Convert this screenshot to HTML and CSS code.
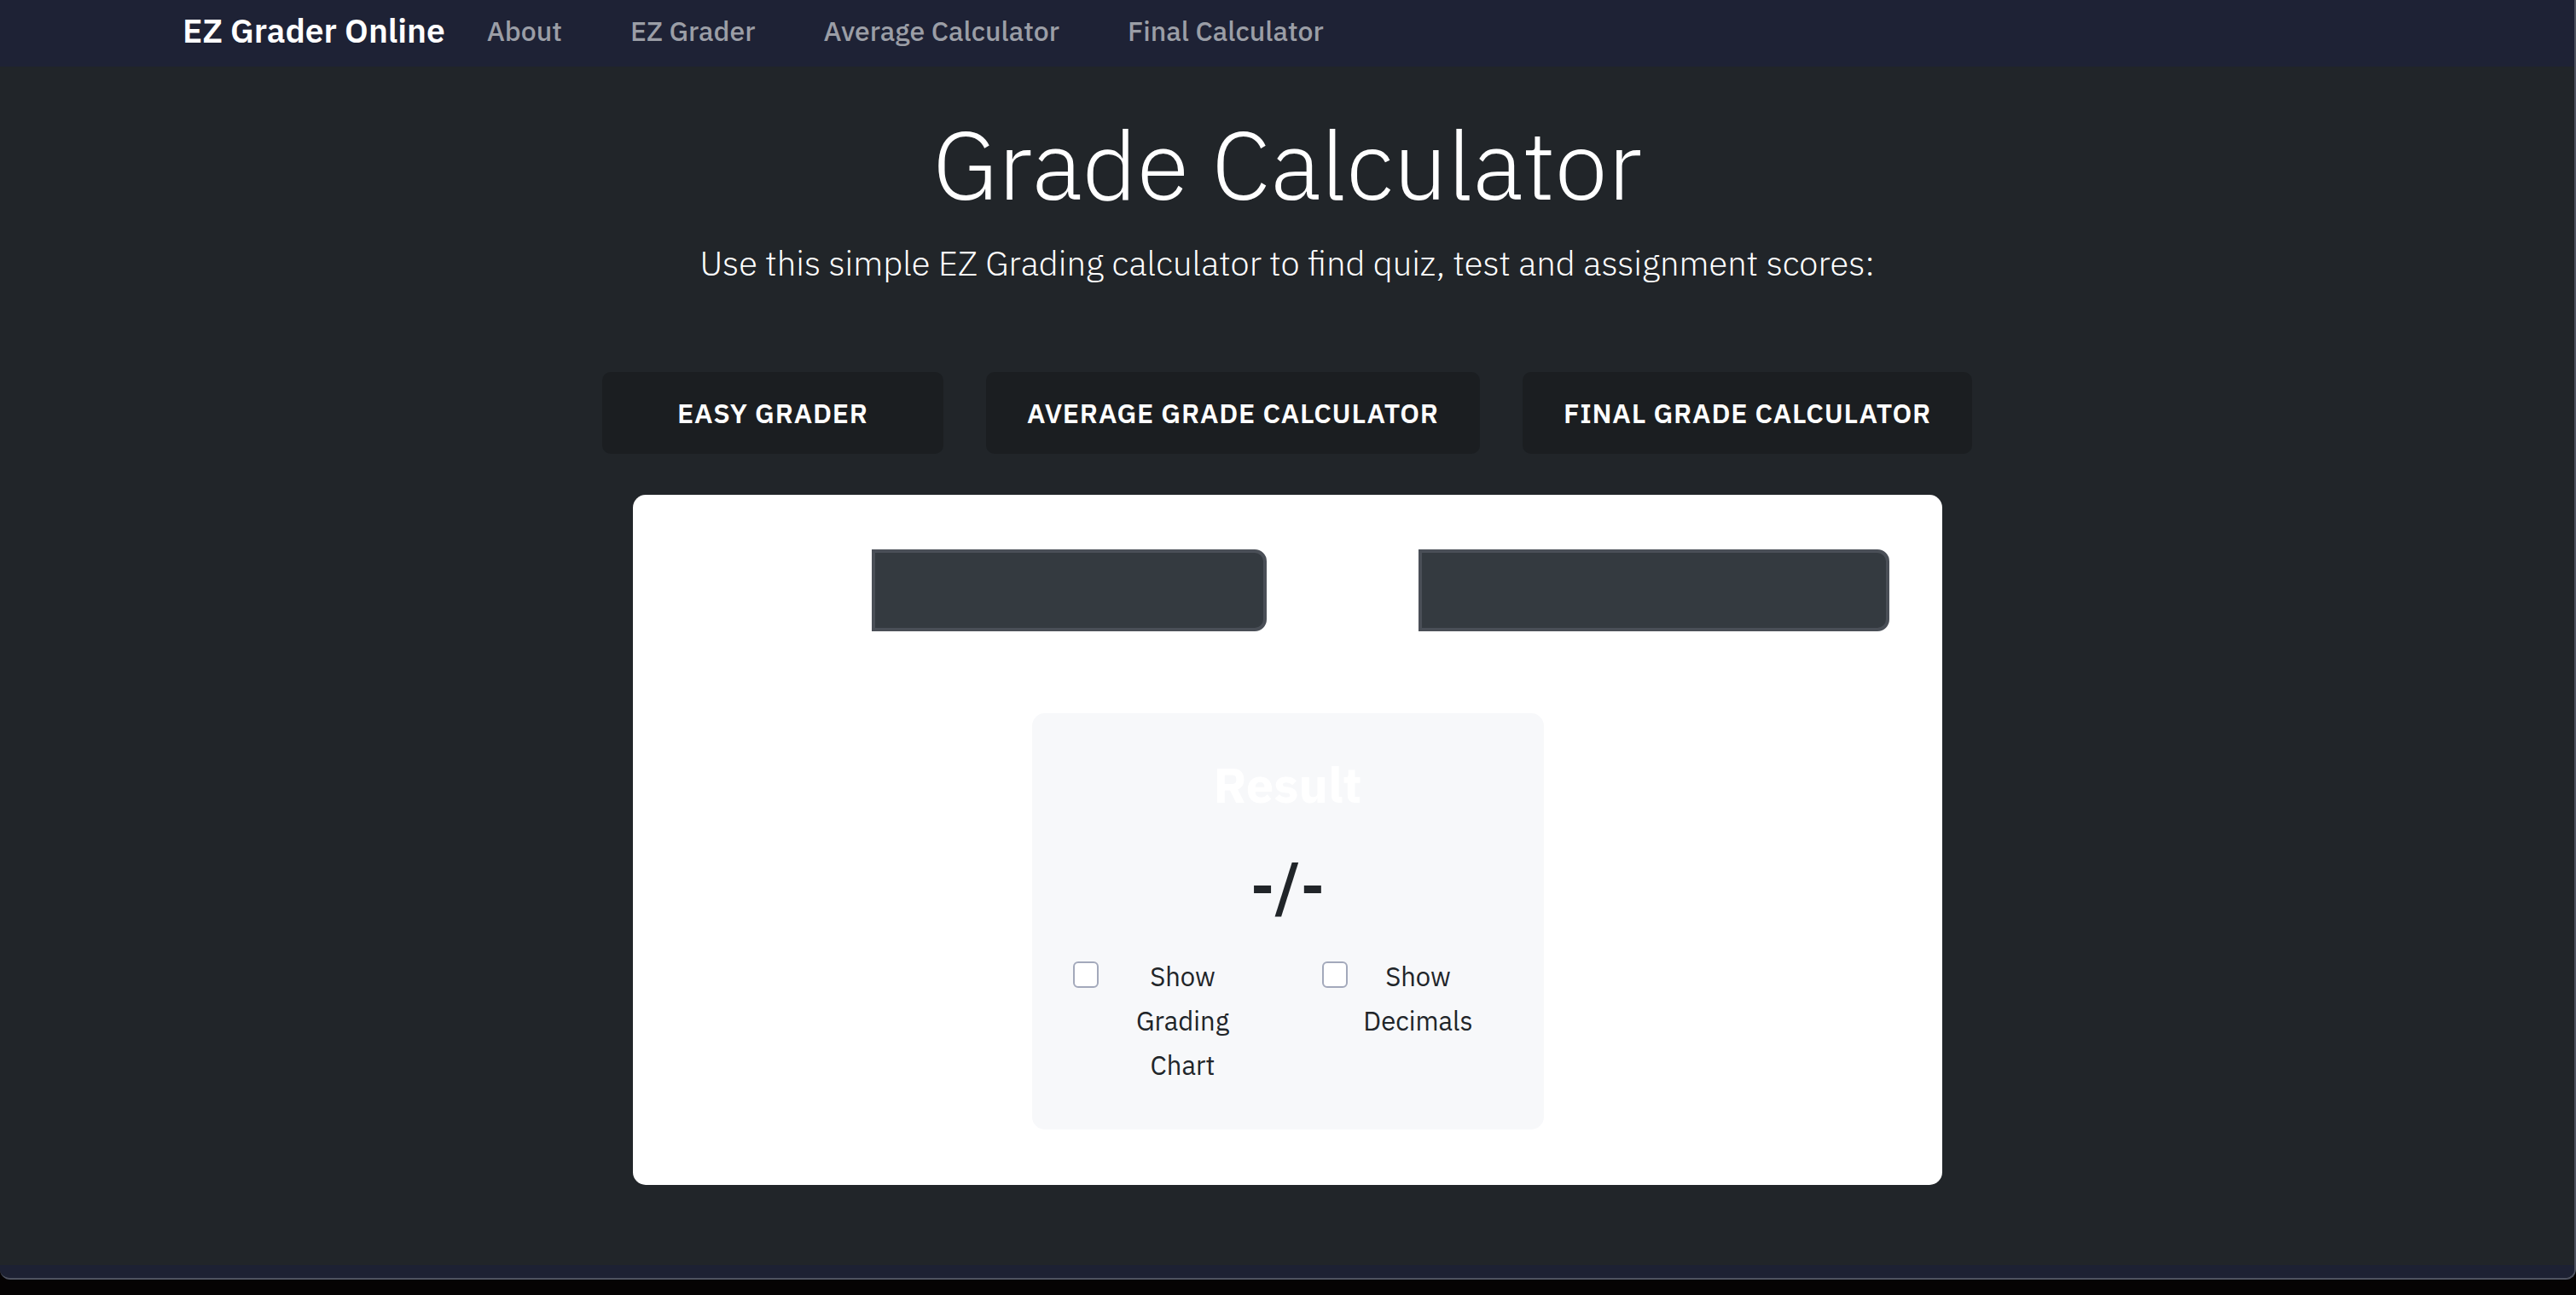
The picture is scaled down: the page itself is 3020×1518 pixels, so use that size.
FILE: index.html
```html
<!DOCTYPE html>
<html lang="en">
<head>
<meta charset="utf-8">
<title>Grade Calculator - EZ Grader Online</title>
<link rel="stylesheet" href="styles.css">
</head>
<body>
<div class="window">
  <nav class="navbar">
    <a class="brand" href="#">EZ Grader Online</a>
    <a class="nav-link" href="#">About</a>
    <a class="nav-link" href="#">EZ Grader</a>
    <a class="nav-link" href="#">Average Calculator</a>
    <a class="nav-link" href="#">Final Calculator</a>
  </nav>
  <main class="main">
    <h1 class="title">Grade Calculator</h1>
    <p class="lead">Use this simple EZ Grading calculator to find quiz, test and assignment scores:</p>
    <div class="tabs">
      <button class="tab tab-easy" type="button">Easy Grader</button>
      <button class="tab" type="button">Average Grade Calculator</button>
      <button class="tab" type="button">Final Grade Calculator</button>
    </div>
    <section class="card">
      <div class="inputs">
        <input class="field field-total" type="text" aria-label="Total">
        <input class="field field-wrong" type="text" aria-label="Wrong">
      </div>
      <div class="result">
        <h2 class="result-title">Result</h2>
        <div class="result-value">-/-</div>
        <div class="checks">
          <label class="check check-chart"><input class="check-box" type="checkbox"><span class="check-text">Show Grading Chart</span></label>
          <label class="check check-dec"><input class="check-box" type="checkbox"><span class="check-text">Show Decimals</span></label>
        </div>
      </div>
    </section>
  </main>
  <footer class="footer"></footer>
</div>
</body>
</html>
```

FILE: styles.css
```css
* { box-sizing: border-box; }

html, body {
  margin: 0;
  padding: 0;
  background: #050303;
}

body {
  font-family: "IBM Plex Sans", Roboto, "Liberation Sans", sans-serif;
  width: 3020px;
  height: 1518px;
  overflow: hidden;
}

.window {
  width: 3020px;
  height: 1500px;
  display: flex;
  flex-direction: column;
  background: #212529;
  border-right: 2px solid #4e5260;
  border-bottom: 2px solid #4e5260;
  border-bottom-left-radius: 12px;
  border-bottom-right-radius: 12px;
  overflow: hidden;
}

/* NAVBAR */
.navbar {
  height: 78px;
  flex: none;
  background: #1e2235;
  display: flex;
  align-items: center;
  padding: 0 0 6px 214px;
}

.brand {
  color: #ffffff;
  text-decoration: none;
  font-size: 39px;
  font-weight: 600;
  line-height: 54px;
  margin-right: 49px;
}

.nav-link {
  color: #9b9ea6;
  text-decoration: none;
  font-size: 32px;
  font-weight: 500;
  line-height: 48px;
  margin-right: 80px;
}

/* MAIN */
.main {
  flex: 1;
  display: flex;
  flex-direction: column;
  align-items: center;
  padding-top: 47px;
}

.title {
  margin: 0;
  color: #ffffff;
  font-size: 112px;
  font-weight: 300;
  line-height: 1.2;
}

.lead {
  margin: 22px 0 0;
  color: #ffffff;
  font-size: 40px;
  font-weight: 300;
  line-height: 54px;
}

.tabs {
  margin-top: 101px;
  display: flex;
  gap: 50px;
}

.tab {
  height: 96px;
  padding: 0 48px;
  border: none;
  border-radius: 10px;
  background: #1b1e21;
  color: #ffffff;
  font-family: inherit;
  font-size: 32px;
  font-weight: 600;
  text-transform: uppercase;
  letter-spacing: 0.8px;
}

.tab-easy { min-width: 400px; }

/* CARD */
.card {
  margin-top: 48px;
  width: 1535px;
  background: #ffffff;
  border-radius: 15px;
  padding: 64px 62px 65px 280px;
}

.inputs {
  display: flex;
  gap: 178px;
}

.field {
  height: 96px;
  background: #343a40;
  border: 4px solid #4a4f57;
  border-radius: 0 14px 14px 0;
  outline: none;
}

.field-total { width: 463px; }
.field-wrong { width: 552px; }

/* RESULT */
.result {
  width: 600px;
  margin: 96px 0 0 188px;
  background: #f7f8fa;
  border-radius: 15px;
  padding: 49px 24px;
  text-align: center;
}

.result-title {
  margin: 0;
  color: #ffffff;
  font-size: 58px;
  font-weight: 700;
  line-height: 1.2;
}

.result-value {
  margin-top: 41px;
  color: #212529;
  font-size: 70px;
  font-weight: 600;
  line-height: 84px;
}

.checks {
  margin-top: 39px;
  display: flex;
  padding-left: 24px;
  text-align: center;
}

.check {
  display: flex;
  align-items: flex-start;
  color: #212529;
  font-size: 31px;
  line-height: 52px;
}

.check-box {
  appearance: none;
  -webkit-appearance: none;
  margin: 8px 0 0;
  width: 30px;
  height: 31px;
  flex: none;
  border: 2px solid #a3a9bb;
  border-radius: 6px;
  background: #ffffff;
}

.check-text { width: 140px; }

.check-chart .check-text { margin-left: 29px; }

.check-dec { margin-left: 93px; }
.check-dec .check-text { margin-left: 13px; }

/* FOOTER */
.footer {
  height: 15px;
  flex: none;
  background: #1d2133;
}
```
